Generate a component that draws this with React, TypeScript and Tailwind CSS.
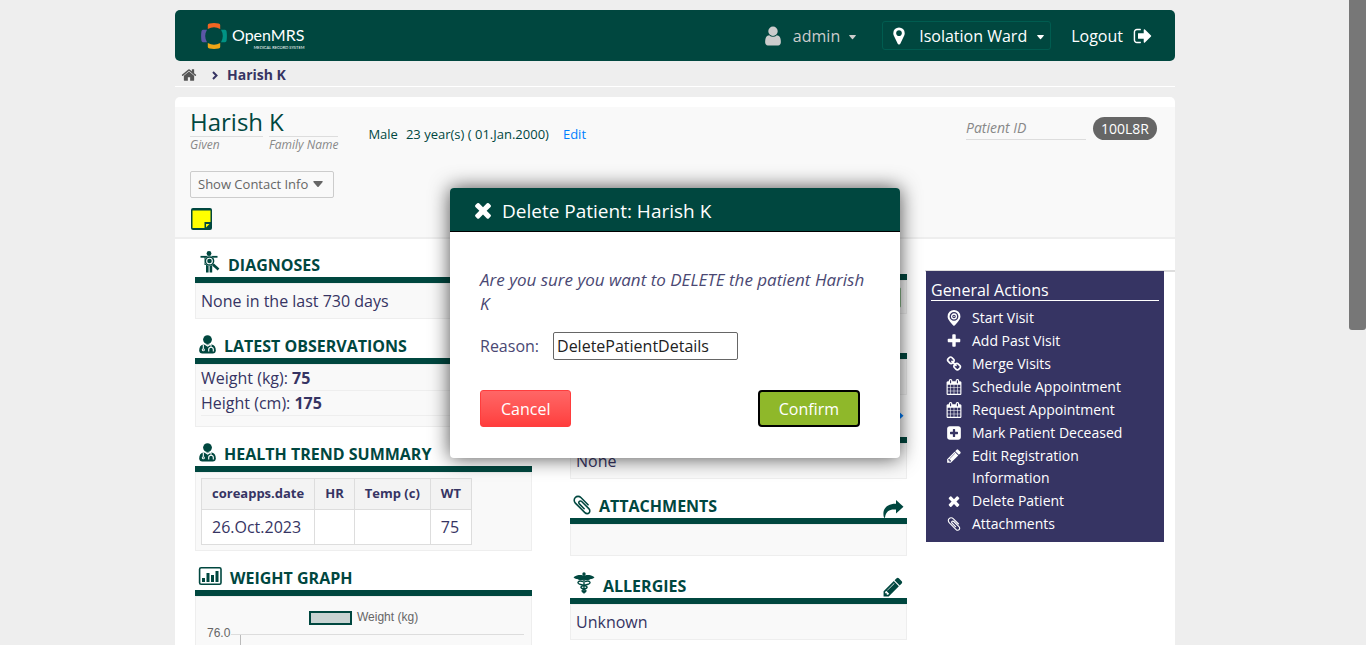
import React from "react";

type IconProps = { className?: string };

const PATHS = {
  home: "M1472 992v480q0 26-19 45t-45 19h-384v-384h-256v384h-384q-26 0-45-19t-19-45v-480q0-1 .5-3t.5-3l575-474 575 474q1 2 1 6zm223-69l-62 74q-8 9-21 11h-3q-13 0-21-7l-692-577-692 577q-12 8-24 7-13-2-21-11l-62-74q-8-10-7-23.5t11-21.5l719-599q32-26 76-26t76 26l244 204v-195q0-14 9-23t23-9h192q14 0 23 9t9 23v408l219 182q10 8 11 21.5t-7 23.5z",
  signOut:
    "M704 1440q0 4 1 20t.5 26.5-3 23.5-10 19.5-20.5 6.5h-320q-119 0-203.5-84.5t-84.5-203.5v-704q0-119 84.5-203.5t203.5-84.5h320q13 0 22.5 9.5t9.5 22.5q0 4 1 20t.5 26.5-3 23.5-10 19.5-20.5 6.5h-320q-66 0-113 47t-47 113v704q0 66 47 113t113 47h312l11.5 1 11.5 3 8 5.5 7 9 2 13.5zm928-544q0 26-19 45l-544 544q-19 19-45 19t-45-19-19-45v-288h-448q-26 0-45-19t-19-45v-384q0-26 19-45t45-19h448v-288q0-26 19-45t45-19 45 19l544 544q19 19 19 45z",
  user: "M1536 1399q0 109-62.5 187t-150.5 78h-854q-88 0-150.5-78t-62.5-187q0-85 8.5-160.5t31.5-152 58.5-131 94-89 134.5-34.5q131 128 313 128t313-128q76 0 134.5 34.5t94 89 58.5 131 31.5 152 8.5 160.5zm-256-887q0 159-112.5 271.5t-271.5 112.5-271.5-112.5-112.5-271.5 112.5-271.5 271.5-112.5 271.5 112.5 112.5 271.5z",
  marker:
    "M1152 640q0-106-75-181t-181-75-181 75-75 181 75 181 181 75 181-75 75-181zm256 0q0 109-33 179l-364 774q-16 33-47.5 52t-67.5 19-67.5-19-46.5-52l-365-774q-33-70-33-179 0-212 150-362t362-150 362 150 150 362z",
  remove:
    "M1490 1322q0 40-28 68l-136 136q-28 28-68 28t-68-28l-294-294-294 294q-28 28-68 28t-68-28l-136-136q-28-28-28-68t28-68l294-294-294-294q-28-28-28-68t28-68l136-136q28-28 68-28t68 28l294 294 294-294q28-28 68-28t68 28l136 136q28 28 28 68t-28 68l-294 294 294 294q28 28 28 68z",
  plus: "M1600 736v192q0 40-28 68t-68 28h-416v416q0 40-28 68t-68 28h-192q-40 0-68-28t-28-68v-416h-416q-40 0-68-28t-28-68v-192q0-40 28-68t68-28h416v-416q0-40 28-68t68-28h192q40 0 68 28t28 68v416h416q40 0 68 28t28 68z",
  link: "M1520 1216q0-40-28-68l-208-208q-28-28-68-28-42 0-72 32 3 3 19 18.5t21.5 21.5 15 19 13 25.5 3.5 27.5q0 40-28 68t-68 28q-15 0-27.5-3.5t-25.5-13-19-15-21.5-21.5-18.5-19q-33 31-33 73 0 40 28 68l206 207q27 27 68 27 40 0 68-26l147-146q28-28 28-67zm-703-705q0-40-28-68l-206-207q-28-28-68-28-39 0-68 27l-147 146q-28 28-28 67 0 40 28 68l208 208q27 27 68 27 42 0 72-31-3-3-19-18.5t-21.5-21.5-15-19-13-25.5-3.5-27.5q0-40 28-68t68-28q15 0 27.5 3.5t25.5 13 19 15 21.5 21.5 18.5 19q33-31 33-73zm895 705q0 120-85 203l-147 146q-83 83-203 83-121 0-204-85l-206-207q-83-83-83-203 0-123 88-209l-88-88q-86 88-208 88-120 0-204-84l-208-208q-84-84-84-204t85-203l147-146q83-83 203-83 121 0 204 85l206 207q83 83 83 203 0 123-88 209l88 88q86-88 208-88 120 0 204 84l208 208q84 84 84 204z",
  calendar:
    "M192 1664h288v-288h-288v288zm352 0h320v-288h-320v288zm-352-352h288v-320h-288v320zm352 0h320v-320h-320v320zm-352-384h288v-288h-288v288zm736 736h320v-288h-320v288zm-384-736h320v-288h-320v288zm768 736h288v-288h-288v288zm-384-352h320v-320h-320v320zm-352-864v-288q0-13-9.5-22.5t-22.5-9.5h-64q-13 0-22.5 9.5t-9.5 22.5v288q0 13 9.5 22.5t22.5 9.5h64q13 0 22.5-9.5t9.5-22.5zm736 864h288v-320h-288v320zm-384-384h320v-288h-320v288zm384 0h288v-288h-288v288zm32-480v-288q0-13-9.5-22.5t-22.5-9.5h-64q-13 0-22.5 9.5t-9.5 22.5v288q0 13 9.5 22.5t22.5 9.5h64q13 0 22.5-9.5t9.5-22.5zm384-64v1280q0 52-38 90t-90 38h-1408q-52 0-90-38t-38-90v-1280q0-52 38-90t90-38h128v-96q0-66 47-113t113-47h64q66 0 113 47t47 113v96h384v-96q0-66 47-113t113-47h64q66 0 113 47t47 113v96h128q52 0 90 38t38 90z",
  clip: "M1596 1385q0 117-79 196t-196 79q-135 0-235-100l-777-776q-113-115-113-271 0-159 110-270t269-111q158 0 273 113l605 606q10 10 10 22 0 16-30.5 46.5t-46.5 30.5q-13 0-23-10l-606-607q-79-77-181-77-106 0-179 75t-73 181q0 105 76 181l776 777q63 63 145 63 64 0 106-42t42-106q0-82-63-145l-581-581q-26-24-60-24-29 0-48 19t-19 48q0 32 25 59l410 410q10 10 10 22 0 16-31 47t-47 31q-12 0-22-10l-410-410q-63-61-63-149 0-82 57-139t139-57q88 0 149 63l581 581q100 98 100 235z",
  pencil:
    "M491 1536l91-91-235-235-91 91v107h128v128h107zm523-928q0-22-22-22-10 0-17 7l-542 542q-7 7-7 17 0 22 22 22 10 0 17-7l542-542q7-7 7-17zm-54-192l416 416-832 832h-416v-416zm683 96q0 53-37 90l-166 166-416-416 166-165q36-38 90-38 53 0 91 38l235 234q37 39 37 91z",
  plusSquare:
    "M1344 960v-128q0-26-19-45t-45-19h-256v-256q0-26-19-45t-45-19h-128q-26 0-45 19t-19 45v256h-256q-26 0-45 19t-19 45v128q0 26 19 45t45 19h256v256q0 26 19 45t45 19h128q26 0 45-19t19-45v-256h256q26 0 45-19t19-45zm320-544v960q0 119-84.5 203.5t-203.5 84.5h-960q-119 0-203.5-84.5t-84.5-203.5v-960q0-119 84.5-203.5t203.5-84.5h960q119 0 203.5 84.5t84.5 203.5z",
};

function Icon({ name, className = "size-4" }: IconProps & { name: keyof typeof PATHS }) {
  return (
    <svg viewBox="0 0 1792 1792" fill="currentColor" aria-hidden="true" className={`shrink-0 ${className}`}>
      <path d={PATHS[name]} />
    </svg>
  );
}

function Caret({ className = "w-2" }: IconProps) {
  return (
    <svg viewBox="0 0 8 5" fill="currentColor" aria-hidden="true" className={`shrink-0 ${className}`}>
      <path d="M0.6 0h6.8q.6.2.3.8L4.5 4.6q-.5.5-1 0L.3.8Q0 .2.6 0z" />
    </svg>
  );
}

function VisitPin() {
  return (
    <svg viewBox="0 0 16 16" aria-hidden="true" className="size-4 shrink-0">
      <path fill="currentColor" fillRule="evenodd" d="M8 0a6.400 6.400 0 0 1 6.400 6.400c0 3.200-3.400 6.400-6.400 9.600-3-3.200-6.400-6.400-6.400-9.600A6.400 6.400 0 0 1 8 0zm0 2a4.400 4.400 0 1 0 0 8.800A4.400 4.400 0 0 0 8 2z" />
      <circle cx="8" cy="6.400" r="2.400" fill="none" stroke="currentColor" strokeWidth="1.300" />
      <circle cx="8" cy="6.400" r=".7" fill="currentColor" />
    </svg>
  );
}

function DiagnosisIcon() {
  return (
    <svg viewBox="-2 0 22 22" fill="none" aria-hidden="true" className="mb-1 size-[22px] shrink-0">
      <circle cx="9" cy="2.500" r="2.400" fill="currentColor" />
      <path stroke="currentColor" strokeWidth="1.800" d="M.5 5.800h17" />
      <path fill="currentColor" d="M4.500 5h9v9h-9zM6 13h2.600v8.500H6zM9.600 13h2.600v8.500H9.600z" />
      <circle cx="9.500" cy="10" r="5" fill="#fff" />
      <circle cx="9.500" cy="10" r="4.100" stroke="currentColor" strokeWidth="1.500" />
      <circle cx="9.500" cy="10" r="2.300" fill="currentColor" />
      <path stroke="currentColor" strokeWidth="2.600" d="m13 13.500 5.500 5" />
    </svg>
  );
}

function DoctorIcon() {
  return (
    <svg viewBox="0 0 18 19" fill="none" aria-hidden="true" className="mb-1 h-[19px] w-[18px] shrink-0">
      <circle cx="9.500" cy="4.600" r="4.400" fill="currentColor" />
      <path fill="currentColor" d="M5.200 9.500h8.600c2.800.6 4 3 4 5.700 0 2.300-1.200 3.300-3 3.300H4.200c-1.800 0-3-1-3-3.300 0-2.700 1.200-5.100 4-5.700z" />
      <path stroke="#fff" strokeWidth="1.100" d="M5.300 9.600v4M13 9.600v2.600M10.700 16.500v-2c0-3 4.600-3 4.600 0v2M6.500 9l3.200 2 3.200-2" />
      <circle cx="5.300" cy="14.800" r="1.500" fill="#fff" />
      <circle cx="5.300" cy="14.800" r=".6" fill="currentColor" />
    </svg>
  );
}

function ChartIcon() {
  return (
    <svg viewBox="0 0 24 20" fill="none" aria-hidden="true" className="mb-1 h-5 w-6 shrink-0">
      <rect x="1.600" y="1.700" width="21.400" height="16.500" rx="1.500" stroke="currentColor" strokeWidth="1.600" />
      <path fill="currentColor" d="M4 12h3v4H4zM8.500 7h3v9h-3zM13 9h3v7h-3zM17.500 5h3v11h-3z" />
    </svg>
  );
}

function CaduceusIcon() {
  return (
    <svg viewBox="0 0 22 22" fill="none" aria-hidden="true" className="mb-1 size-[22px] shrink-0">
      <circle cx="11" cy="2" r="1.700" fill="currentColor" />
      <path fill="currentColor" d="M11 4C9 2.600 4 2.700.5 5.200c1.300 1.700 3 1.800 4 1.800.8 1.300 3.500 1.300 6.500.8 3 .5 5.700.5 6.500-.8 1 0 2.700-.1 4-1.800C18 2.700 13 2.600 11 4z" />
      <path stroke="currentColor" strokeWidth="1.400" d="M11 3v18.500M10 9.500c-5-1.500-6.500 1.500-3.500 2.700 2.500 1 6.500.8 7.500 2.600 1 2.200-5 2.200-5 4 0 1 1 1.500 2 1.700M12 9.500c5-1.500 6.500 1.500 3.500 2.700-2.500 1-6.500.8-7.500 2.600-1 2.200 5 2.200 5 4 0 1-1 1.500-2 1.700" />
    </svg>
  );
}

function ShareIcon() {
  return (
    <svg viewBox="0 0 22 18" fill="currentColor" aria-hidden="true" className="h-[18px] w-[22px]">
      <path d="M14 0l7.500 6.800L14 13.500V9.600C8 9 4 10.800 3 17.600 2.900 18 2.200 18 2 17.600-.5 9 5 3.500 14 3.700z" />
    </svg>
  );
}

function Logo() {
  return (
    <span className="flex items-center gap-[5px]">
      <svg viewBox="0 0 26 26" fill="none" aria-hidden="true" className="size-[26px]">
        <path fill="#f26522" d="M6.800 2Q6.800.6 8.500.4q4.500-.6 9 0 1.700.2 1.700 1.600v4Q13 2.400 6.800 6z" />
        <path fill="#eea616" d="M6.800 24q0 1.400 1.700 1.600 4.500.6 9 0 1.700-.2 1.700-1.600v-4Q13 23.600 6.800 20z" />
        <path fill="#5b57a6" d="M2 6.800Q.6 6.800.4 8.500q-.6 4.500 0 9 .2 1.700 1.600 1.700h4Q2.400 13 6 6.800z" />
        <path fill="#009384" d="M24 6.800q1.400 0 1.600 1.700.6 4.500 0 9-.2 1.700-1.600 1.700h-4Q23.600 13 20 6.800z" />
      </svg>
      <span className="flex flex-col items-end pt-1 font-['Lato',sans-serif] text-white">
        <span className="text-base leading-5">OpenMRS</span>
        <span className="text-[4px] leading-[5px]">MEDICAL RECORD SYSTEM</span>
      </span>
    </span>
  );
}

type SectionProps = {
  icon?: React.ReactNode;
  title?: string;
  action?: React.ReactNode;
  head?: string;
  children?: React.ReactNode;
};

function Section({ icon, title, action, head = "h-[45px]", children }: SectionProps) {
  return (
    <section>
      <header className={`flex items-end border-b-[6px] border-[#00473f] px-[3px] text-[#00473f] ${head}`}>
        {icon}
        {title && <h3 className="ml-2 text-base leading-6 font-bold uppercase">{title}</h3>}
        {action && <span className="ml-auto flex">{action}</span>}
      </header>
      <div className="border border-[#eee] bg-[#f9f9f9] px-[5px]">{children}</div>
    </section>
  );
}

const ACTIONS: { label: string; icon: React.ReactNode }[] = [
  { label: "Start Visit", icon: <VisitPin /> },
  { label: "Add Past Visit", icon: <Icon name="plus" /> },
  { label: "Merge Visits", icon: <Icon name="link" /> },
  { label: "Schedule Appointment", icon: <Icon name="calendar" /> },
  { label: "Request Appointment", icon: <Icon name="calendar" /> },
  { label: "Mark Patient Deceased", icon: <Icon name="plusSquare" /> },
  { label: "Edit Registration Information", icon: <Icon name="pencil" /> },
  { label: "Delete Patient", icon: <Icon name="remove" /> },
  { label: "Attachments", icon: <Icon name="clip" /> },
];

function TopBar() {
  return (
    <header className="flex h-[51px] items-center rounded-[5px] bg-[#00473f] pr-[22px] pl-[26px] text-white">
      <a href="#home" aria-label="OpenMRS">
        <Logo />
      </a>
      <nav className="ml-auto flex items-center text-base">
        <button type="button" className="mr-[26px] flex items-center text-[#ccc]">
          <Icon name="user" className="size-[22px]" />
          <span className="mx-[9px]">admin</span>
          <Caret className="mt-1 w-[7px]" />
        </button>
        <button type="button" className="mr-5 flex h-[29px] items-center rounded-[3px] border border-[#005c50] px-[6px]">
          <Icon name="marker" className="size-5" />
          <span className="mr-2.5 ml-2.5">Isolation Ward</span>
          <Caret className="mt-1 w-[7px]" />
        </button>
        <a href="#logout" className="flex items-center gap-2.5">
          Logout
          <Icon name="signOut" className="size-5" />
        </a>
      </nav>
    </header>
  );
}

function PatientHeader() {
  return (
    <div className="flex h-[132px] items-start border-b-2 border-[#eee] bg-[#f9f9f9] px-[15px] text-[#00473f]">
      <div>
        <div className="flex items-start">
          <h1 className="flex gap-1.5 text-2xl leading-[29px]">
            <span>
              <span className="block border-b border-[#ddd]">Harish</span>
              <em className="block text-xs leading-4 text-[#888]">Given</em>
            </span>
            <span>
              <span className="block border-b border-[#ddd]">K</span>
              <em className="block text-xs leading-4 text-[#888]">Family Name</em>
            </span>
          </h1>
          <p className="mt-[17px] ml-[30px] flex text-[13px] leading-5">
            <span className="mr-2">Male</span>
            <span className="mr-3.5">23 year(s) ( 01.Jan.2000)</span>
            <a href="#edit" className="text-[#007fff]">
              Edit
            </a>
          </p>
        </div>
        <button
          type="button"
          className="mt-[18px] flex h-[27px] items-center gap-[5px] rounded-[2px] border border-[#ccc] pr-2.5 pl-[7px] text-[13px] text-[#666]"
        >
          Show Contact Info
          <Caret className="w-2.5" />
        </button>
        <button type="button" aria-label="Sticky note" className="mt-2.5 ml-px block">
          <svg viewBox="0 0 21 22" aria-hidden="true" className="h-[22px] w-[21px]">
            <rect width="21" height="22" rx="2" fill="#00473f" />
            <path fill="#ff0" d="M1.500 2.500h18v11.500h-6v6h-12z" />
            <path fill="#ff0" d="M15 16h3.500L15 19.500z" />
          </svg>
        </button>
      </div>
      <div className="mt-[10px] mr-[3px] ml-auto flex items-start gap-[7px]">
        <em className="w-[120px] border-b border-[#ddd] text-sm leading-[22px] text-[#888]">Patient ID</em>
        <span className="rounded-full bg-[#666] px-2 text-sm leading-[23px] text-white">100L8R</span>
      </div>
    </div>
  );
}

function WeightChart() {
  return (
    <svg viewBox="0 0 325 220" role="img" aria-label="Weight chart" className="block w-full">
      <rect x="109" y="15" width="41" height="12" fill="#c8d3d2" stroke="#00473f" strokeWidth="2" />
      <g fill="#666" fontFamily="Liberation Sans, sans-serif" fontSize="12">
        <text x="156" y="24">Weight (kg)</text>
        <text x="6" y="40">76.0</text>
      </g>
      <path fill="none" stroke="#ddd" d="M30 37.500h293" />
      <path fill="none" stroke="#bbb" d="M39.500 38v182" />
    </svg>
  );
}

function DeleteDialog() {
  return (
    <div className="absolute inset-x-0 top-[188px] mr-4 flex justify-center">
      <form
        role="dialog"
        aria-labelledby="dialog-title"
        onSubmit={(event) => event.preventDefault()}
        className="w-[450px] rounded-[4px] bg-white text-[#4a4873] shadow-[0_0_20px_rgba(0,0,0,0.7)]"
      >
        <header className="flex h-11 items-center gap-[7px] rounded-t-[4px] border-b border-black bg-[#00473f] px-[21px] text-white">
          <Icon name="remove" className="size-6" />
          <h3 id="dialog-title" className="pt-0.5 text-[19px] leading-6">
            Delete Patient: Harish K
          </h3>
        </header>
        <div className="px-[30px] pt-9 pb-[31px]">
          <p className="text-[17px] leading-6 italic">Are you sure you want to DELETE the patient Harish K</p>
          <div className="mt-4 flex items-center gap-[14px]">
            <label htmlFor="reason">Reason:</label>
            <input
              id="reason"
              type="text"
              defaultValue="DeletePatientDetails"
              className="h-7 w-[185px] rounded-[2px] border border-[#666] px-[3px] text-base text-[#222]"
            />
          </div>
          <div className="mt-[30px] mr-2.5 flex justify-between text-base text-white">
            <button
              type="button"
              className="h-[37px] rounded-[3px] border border-[#ff3d3d] bg-linear-to-b from-[#ff6666] to-[#ff3d3d] px-5"
            >
              Cancel
            </button>
            <button type="submit" className="h-[37px] rounded-[4px] border-2 border-black bg-[#8fb82a] px-[19px]">
              Confirm
            </button>
          </div>
        </div>
      </form>
    </div>
  );
}

export default function App() {
  const th = "h-[31px] border border-[#ddd] bg-[#f3f3f3] px-2.5 text-left text-[13px] font-bold";
  const td = "h-[35px] border border-[#ddd] bg-white px-2.5";
  return (
    <div className="relative h-screen overflow-hidden bg-[#eee] font-['Open_Sans',sans-serif] text-base text-[#363463]">
      <div className="mr-4">
        <div className="mx-auto max-w-[1000px] pt-2.5">
          <TopBar />
          <nav aria-label="Breadcrumb" className="flex h-[26px] items-center border-b border-white px-1.5 pt-0.5 text-sm font-bold">
            <a href="#home" aria-label="Home" className="text-[#555]">
              <Icon name="home" />
            </a>
            <svg viewBox="0 0 6 9" fill="none" stroke="currentColor" strokeWidth="2" aria-hidden="true" className="mx-[9px] mt-0.5 ml-[15px] h-[9px] w-1.5">
              <path d="M1 1l3.500 3.500L1 8" />
            </svg>
            <span>Harish K</span>
          </nav>

          <main className="mt-2.5 rounded-t-[5px] bg-white pt-2.5">
            <PatientHeader />
            <div className="flex min-h-[460px] items-start">
              <div className="grid flex-1 grid-cols-2 items-start gap-[38px] pr-[18px] pl-5">
                <div>
                  <Section icon={<DiagnosisIcon />} title="Diagnoses" head="h-[44px]">
                    <p className="leading-[34px]">None in the last 730 days</p>
                  </Section>
                  <Section icon={<DoctorIcon />} title="Latest Observations">
                    <ul className="pt-px pb-2.5 leading-6">
                      <li className="border-b border-[#eee]">
                        Weight (kg): <b className="font-bold">75</b>
                      </li>
                      <li className="border-b border-[#eee]">
                        Height (cm): <b className="font-bold">175</b>
                      </li>
                    </ul>
                  </Section>
                  <Section icon={<DoctorIcon />} title="Health Trend Summary">
                    <table className="mt-[5px] mb-[5px] border-collapse">
                      <thead>
                        <tr>
                          <th className={th}>coreapps.date</th>
                          <th className={th}>HR</th>
                          <th className={th}>Temp (c)</th>
                          <th className={th}>WT</th>
                        </tr>
                      </thead>
                      <tbody>
                        <tr>
                          <td className={td}>26.Oct.2023</td>
                          <td className={td} />
                          <td className={td} />
                          <td className={td}>75</td>
                        </tr>
                      </tbody>
                    </table>
                  </Section>
                  <Section icon={<ChartIcon />} title="Weight Graph">
                    <WeightChart />
                  </Section>
                </div>
                <div>
                  <Section head="h-[41px]">
                    <div className="flex h-8 items-center justify-end">
                      <span className="h-[21px] w-10 rounded-[2px] border border-[#8fbf8f] bg-[#a9d3a0]" />
                    </div>
                  </Section>
                  <Section>
                    <div className="h-[34px]" />
                  </Section>
                  <Section
                    head="h-12"
                    action={
                      <button type="button" aria-label="Share" className="mb-2.5 text-[#007fff]">
                        <ShareIcon />
                      </button>
                    }
                  >
                    <p className="leading-[34px]">None</p>
                  </Section>
                  <Section
                    icon={<Icon name="clip" className="-mx-0.5 mb-0.5 size-[22px]" />}
                    title="Attachments"
                    action={
                      <button type="button" aria-label="Open attachments">
                        <ShareIcon />
                      </button>
                    }
                  >
                    <div className="h-[30px]" />
                  </Section>
                  <Section
                    head="h-12"
                    icon={<CaduceusIcon />}
                    title="Allergies"
                    action={
                      <button type="button" aria-label="Edit allergies">
                        <Icon name="pencil" className="size-[22px]" />
                      </button>
                    }
                  >
                    <p className="leading-[34px]">Unknown</p>
                  </Section>
                </div>
              </div>
              <aside className="mt-[31px] w-[250px] border-t-2 border-[#ddd] pr-[11px] pl-px">
                <div className="-mt-px bg-[#363463] px-[5px] pt-2 pb-1.5 text-white">
                  <h2 className="border-b border-white pt-px text-base leading-5">General Actions</h2>
                  <ul className="mt-[5px] pb-px pl-[15px] text-sm leading-[22px]">
                    {ACTIONS.map((action) => (
                      <li key={action.label}>
                        <a href="#action" className="flex gap-2.5 pt-px">
                          <span className="flex h-[22px] items-center">{action.icon}</span>
                          {action.label}
                        </a>
                      </li>
                    ))}
                  </ul>
                </div>
              </aside>
            </div>
          </main>
        </div>
      </div>
      <DeleteDialog />
      <div aria-hidden="true" className="absolute top-0 right-0 h-[330px] w-[17px] rounded-b-[3px] bg-[#777]" />
    </div>
  );
}
